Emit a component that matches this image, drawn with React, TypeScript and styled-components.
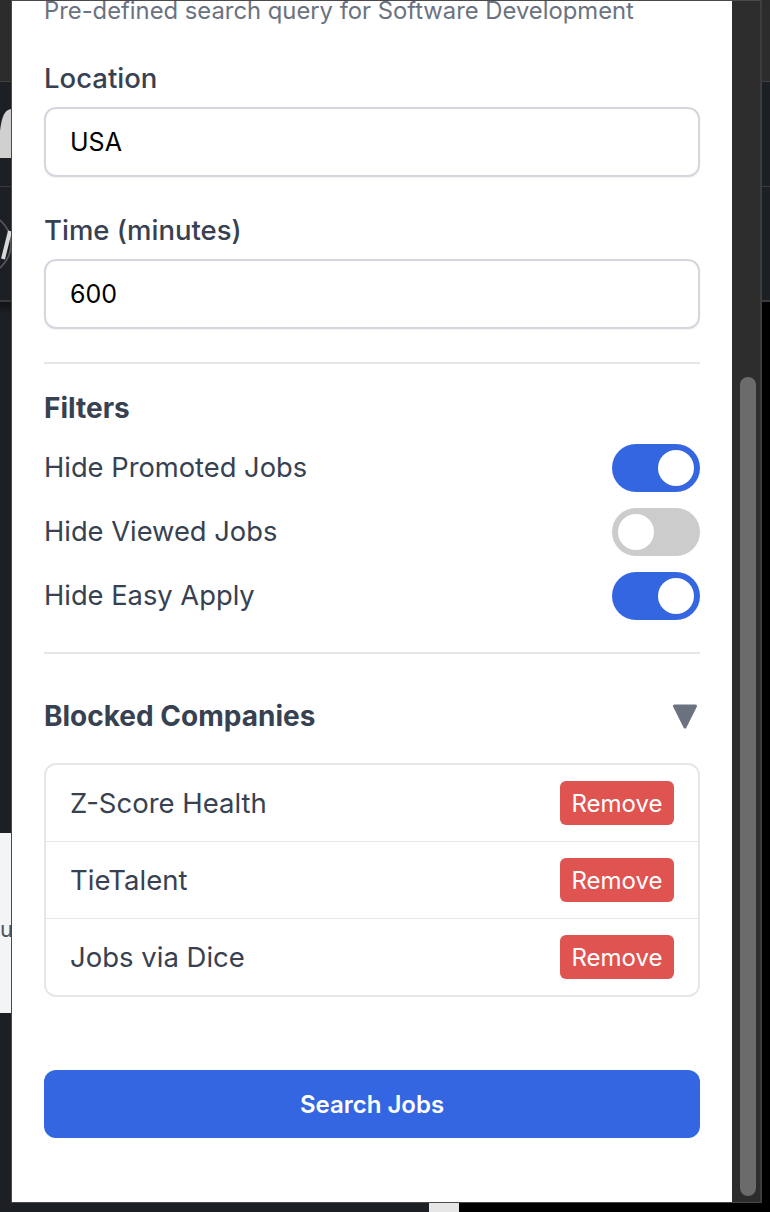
import React from "react";
import styled, { createGlobalStyle } from "styled-components";

const Global = createGlobalStyle`
  html, body {
    margin: 0;
    padding: 0;
    width: 770px;
    height: 1212px;
    overflow: hidden;
    background: #000;
  }
  * { box-sizing: border-box; }
  body {
    font-family: Inter, "Noto Sans", "Liberation Sans", sans-serif;
  }
`;

/* ---------- backdrop page (behind the popup) ---------- */

const Backdrop = styled.div`
  position: relative;
  width: 770px;
  height: 1212px;
  display: flex;
  flex-direction: column;
  background: #000;
`;

const TopBar = styled.div`
  height: 82px;
  background: #2c2c2c;
  border-bottom: 1px solid #3f3f3f;
`;

const Nav = styled.div`
  height: 220px;
  display: flex;
  flex-direction: column;
  background: #1c1f24;
  border-bottom: 2px solid #3a3a3a;
`;

const NavRow = styled.div<{ $h?: number }>`
  height: ${(p) => (p.$h ? `${p.$h}px` : "auto")};
  flex: ${(p) => (p.$h ? "none" : "1")};
  display: flex;
  align-items: center;
  border-bottom: ${(p) => (p.$h ? "1px solid #3a3a3a" : "none")};
`;

const BodyArea = styled.div`
  flex: 1;
  display: flex;
`;

const MainColumn = styled.div`
  width: 459px;
  display: flex;
  flex-direction: column;
  background: linear-gradient(#121316 0px, #1c1f24 12px);
`;

const SideColumn = styled.div`
  flex: 1;
  background: #000;
`;

const FeedCard = styled.div`
  margin-top: 531px;
  height: 180px;
  width: 300px;
  background: #f3f4f6;
  display: flex;
  align-items: center;
  padding: 12px 0 0 0;
  color: #4b5563;
  font-size: 22px;
`;

const BottomTab = styled.div`
  margin-top: auto;
  margin-left: 429px;
  width: 30px;
  height: 9px;
  background: #e6e6e6;
`;

/* ---------- popup ---------- */

const Popup = styled.div`
  position: absolute;
  top: 0;
  left: 11px;
  width: 751px;
  height: 1203px;
  display: flex;
  border: 1px solid #4a4a4a;
  border-right: 2px solid #3d3d3d;
  background: #2d2d2d;
`;

const Panel = styled.div`
  width: 720px;
  height: 100%;
  overflow: hidden;
  background: #fff;
  padding: 0 32px;
  display: flex;
  flex-direction: column;
`;

const ScrollTrack = styled.div`
  flex: 1;
  padding: 376px 0 0 8px;
  background: #2d2d2d;
`;

const ScrollThumb = styled.div`
  width: 16px;
  height: 819px;
  border-radius: 8px;
  background: #6b6b6b;
`;

const Subtitle = styled.div`
  font-size: 23.8px;
  line-height: 20px;
  color: #6b7280;
  white-space: nowrap;
`;

const FieldLabel = styled.label<{ $mt: number }>`
  display: block;
  margin-top: ${(p) => p.$mt}px;
  font-size: 27.5px;
  font-weight: 500;
  line-height: 28px;
  color: #374151;
`;

const TextInput = styled.input`
  margin-top: 15px;
  width: 100%;
  height: 70px;
  padding: 0 24px;
  border: 2px solid #d4d7dd;
  border-radius: 12px;
  box-shadow: 0 1px 2px rgba(0, 0, 0, 0.06);
  font-family: inherit;
  font-size: 25px;
  color: #000;
  background: #fff;
  outline: none;
`;

const Divider = styled.hr<{ $mt: number }>`
  margin: ${(p) => p.$mt}px 0 0;
  height: 2px;
  border: none;
  background: #e5e7eb;
`;

const SectionTitle = styled.h2`
  margin: 0;
  font-size: 28px;
  font-weight: 700;
  line-height: 28px;
  color: #374151;
`;

const FiltersTitle = styled(SectionTitle)`
  margin-top: 30px;
`;

const FilterList = styled.div`
  margin-top: 22px;
  display: flex;
  flex-direction: column;
  gap: 16px;
`;

const FilterRow = styled.div`
  height: 48px;
  display: flex;
  align-items: center;
  justify-content: space-between;
  font-size: 27.3px;
  line-height: 28px;
  color: #374151;
`;

const Toggle = styled.div<{ $on: boolean }>`
  width: 88px;
  height: 48px;
  border-radius: 24px;
  padding: 6px;
  display: flex;
  justify-content: ${(p) => (p.$on ? "flex-end" : "flex-start")};
  background: ${(p) => (p.$on ? "#3366e0" : "#cccccc")};
`;

const Knob = styled.div`
  width: 36px;
  height: 36px;
  border-radius: 50%;
  background: #fff;
`;

const BlockedHeader = styled.div`
  margin-top: 48px;
  height: 28px;
  display: flex;
  align-items: center;
  justify-content: space-between;
`;

const Caret = styled.svg`
  margin-right: 2px;
  display: block;
`;

const CompanyList = styled.ul`
  margin: 33px 0 0;
  padding: 0;
  list-style: none;
  border: 2px solid #e5e7eb;
  border-radius: 12px;
  overflow: hidden;
`;

const CompanyRow = styled.li`
  box-sizing: content-box;
  height: 76px;
  padding: 0 24px;
  display: flex;
  align-items: center;
  justify-content: space-between;
  font-size: 27.5px;
  line-height: 27px;
  color: #374151;
  & + & {
    border-top: 1px solid #e5e7eb;
  }
`;

const RemoveButton = styled.button`
  width: 114px;
  height: 44px;
  border: none;
  border-radius: 6px;
  background: #df5350;
  color: #fff;
  font-family: inherit;
  font-size: 24px;
  font-weight: 400;
  padding: 0;
`;

const SearchButton = styled.button`
  margin-top: 73px;
  width: 100%;
  height: 68px;
  border: none;
  border-radius: 12px;
  background: #3366e0;
  color: #fff;
  font-family: inherit;
  font-size: 24px;
  font-weight: 600;
`;

const filters = [
  { label: "Hide Promoted Jobs", on: true },
  { label: "Hide Viewed Jobs", on: false },
  { label: "Hide Easy Apply", on: true },
];

const companies = ["Z-Score Health", "TieTalent", "Jobs via Dice"];

export default function App() {
  return (
    <>
      <Global />
      <Backdrop>
        <TopBar />
        <Nav>
          <NavRow $h={105}>
            <svg width="11" height="50" viewBox="0 0 11 50">
              <path d="M0 49 L0 22 Q2 4 8 1 L11 0 L11 49 Z" fill="#d0d0d0" />
            </svg>
          </NavRow>
          <NavRow>
            <svg width="11" height="70" viewBox="0 0 11 70">
              <circle cx="-20" cy="35" r="31" fill="none" stroke="#5a5c60" strokeWidth="1.5" />
              <path d="M3 50 L10 22" stroke="#d8d8d8" strokeWidth="4" />
            </svg>
          </NavRow>
        </Nav>
        <BodyArea>
          <MainColumn>
            <FeedCard>u</FeedCard>
            <BottomTab />
          </MainColumn>
          <SideColumn />
        </BodyArea>

        <Popup>
          <Panel>
            <Subtitle>Pre-defined search query for Software Development</Subtitle>

            <FieldLabel $mt={43}>Location</FieldLabel>
            <TextInput defaultValue="USA" />

            <FieldLabel $mt={39}>Time (minutes)</FieldLabel>
            <TextInput defaultValue="600" />

            <Divider $mt={33} />

            <FiltersTitle>Filters</FiltersTitle>
            <FilterList>
              {filters.map((f) => (
                <FilterRow key={f.label}>
                  <span>{f.label}</span>
                  <Toggle $on={f.on}>
                    <Knob />
                  </Toggle>
                </FilterRow>
              ))}
            </FilterList>

            <Divider $mt={32} />

            <BlockedHeader>
              <SectionTitle>Blocked Companies</SectionTitle>
              <Caret width="26" height="25" viewBox="0 0 26 25">
                <path
                  d="M2.5 2 L23.5 2 L13 23 Z"
                  fill="#6b7280"
                  stroke="#6b7280"
                  strokeWidth="3"
                  strokeLinejoin="round"
                />
              </Caret>
            </BlockedHeader>

            <CompanyList>
              {companies.map((c) => (
                <CompanyRow key={c}>
                  <span>{c}</span>
                  <RemoveButton>Remove</RemoveButton>
                </CompanyRow>
              ))}
            </CompanyList>

            <SearchButton>Search Jobs</SearchButton>
          </Panel>
          <ScrollTrack>
            <ScrollThumb />
          </ScrollTrack>
        </Popup>
      </Backdrop>
    </>
  );
}
